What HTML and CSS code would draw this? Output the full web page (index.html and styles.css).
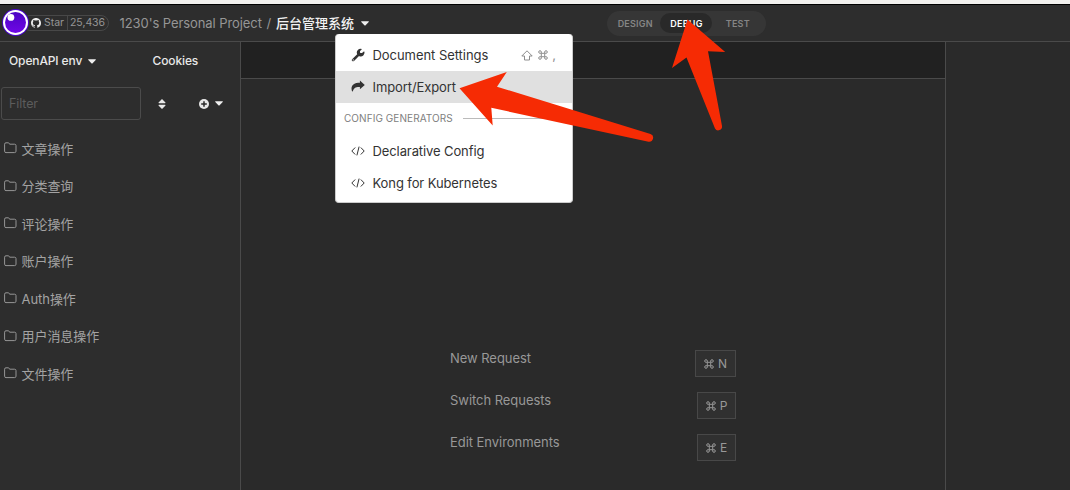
FILE: index.html
```html
<!DOCTYPE html>
<html lang="en">
<head>
<meta charset="utf-8">
<title>后台管理系统</title>
<link rel="stylesheet" href="styles.css">
</head>
<body>
<svg class="defs" width="0" height="0">
  <symbol id="folder" viewBox="0 0 13 12"><path d="M.6 2.200Q.6.800 2 .8h2.200q.8 0 1.100.7l.3.700h5Q12 2.200 12 3.600v5.600q0 1.400-1.400 1.400H2Q.6 10.600 .6 9.200z" fill="none" stroke="currentColor"/></symbol>
  <symbol id="caret" viewBox="0 0 8 5"><path d="M.4.2h7.200q.5.300.1.700L4.400 4.400q-.4.300-.8 0L.3.900Q-.1.500.4.200z" fill="currentColor"/></symbol>
  <symbol id="code" viewBox="0 0 14 10"><path d="M4.200 1.500.8 5l3.400 3.500M9.800 1.500 13.200 5 9.800 8.500M8.100.6 5.900 9.400" fill="none" stroke="currentColor" stroke-width="1"/></symbol>
  <symbol id="cmd" viewBox="0 0 10 10"><path d="M3.300 3.300h3.400v3.400H3.300zM3.300 3.300H2.100A1.300 1.300 0 1 1 3.300 2zM6.700 3.300V2a1.300 1.300 0 1 1 1.200 1.300zM6.700 6.700h1.200A1.300 1.300 0 1 1 6.700 8zM3.300 6.700V8a1.300 1.300 0 1 1-1.200-1.300z" fill="none" stroke="currentColor" stroke-width="1"/></symbol>
</svg>
<div class="app">
  <div class="window-edge"></div>
  <header class="header">
    <svg class="logo" viewBox="0 0 27 27"><defs><linearGradient id="violet" x1="0" y1="0" x2="0" y2="1"><stop offset="0" stop-color="#4b04c4"/><stop offset="1" stop-color="#7006e6"/></linearGradient></defs><circle cx="13.500" cy="13.500" r="13.400" fill="#4a06cf"/><circle cx="13.500" cy="13.500" r="12.500" fill="#fff"/><circle cx="13.500" cy="13.500" r="10.500" fill="url(#violet)"/><circle cx="8.900" cy="8.400" r="3.400" fill="#fff"/></svg>
    <div class="stars">
      <span class="star-label"><svg class="github" viewBox="0 0 16 16"><path fill="currentColor" d="M8 0C3.580 0 0 3.580 0 8c0 3.540 2.290 6.530 5.470 7.590.4.070.55-.17.55-.38v-1.490c-2.010.37-2.530-.49-2.690-.94-.09-.23-.48-.94-.82-1.130-.28-.15-.68-.52-.01-.53.63-.01 1.080.58 1.230.82.72 1.210 1.870.87 2.330.66.070-.52.280-.87.510-1.070-1.780-.2-3.640-.89-3.640-3.950 0-.87.31-1.590.82-2.150-.08-.2-.36-1.020.08-2.120 0 0 .67-.21 2.200.82a7.600 7.600 0 0 1 4 0c1.530-1.040 2.200-.82 2.200-.82.44 1.100.16 1.920.08 2.120.51.560.82 1.270.82 2.150 0 3.070-1.870 3.750-3.650 3.950.29.25.54.73.54 1.480v2.200c0 .21.15.46.55.38A8 8 0 0 0 16 8c0-4.420-3.580-8-8-8z"/></svg>Star</span>
      <span class="star-count">25,436</span>
    </div>
    <div class="crumbs"><span class="project">1230's Personal Project</span><span class="slash">/</span><b class="document">后台管理系统</b><svg class="caret"><use href="#caret"/></svg></div>
    <nav class="tabs"><span class="tab">DESIGN</span><span class="tab tab-active">DEBUG</span><span class="tab">TEST</span></nav>
  </header>
  <div class="columns">
    <aside class="sidebar">
      <div class="env-row"><span class="env">OpenAPI env</span><svg class="caret"><use href="#caret"/></svg><span class="cookies">Cookies</span></div>
      <div class="filter-row">
        <div class="filter">Filter</div>
        <svg class="sort" viewBox="0 0 8 10"><path d="M4 0 7.500 3.600Q7.600 4.200 7 4.200H1Q.4 4.200.5 3.600zM4 10 7.500 6.400Q7.600 5.800 7 5.800H1Q.4 5.800.5 6.400z" fill="currentColor"/></svg>
        <svg class="plus" viewBox="0 0 10 10"><circle cx="5" cy="5" r="5" fill="currentColor"/><path d="M5 2.200v5.600M2.200 5h5.600" stroke="#2a2a2a" stroke-width="1.500"/></svg>
        <svg class="caret"><use href="#caret"/></svg>
      </div>
      <ul class="folders">
        <li><svg><use href="#folder"/></svg>文章操作</li>
        <li><svg><use href="#folder"/></svg>分类查询</li>
        <li><svg><use href="#folder"/></svg>评论操作</li>
        <li><svg><use href="#folder"/></svg>账户操作</li>
        <li><svg><use href="#folder"/></svg>Auth操作</li>
        <li><svg><use href="#folder"/></svg>用户消息操作</li>
        <li><svg><use href="#folder"/></svg>文件操作</li>
      </ul>
    </aside>
    <main class="request">
      <div class="url-bar"></div>
      <div class="hints">
        <div class="hint"><span>New Request</span><kbd class="key-wide"><svg class="cmd"><use href="#cmd"/></svg>N</kbd></div>
        <div class="hint"><span>Switch Requests</span><kbd><svg class="cmd"><use href="#cmd"/></svg>P</kbd></div>
        <div class="hint"><span>Edit Environments</span><kbd><svg class="cmd"><use href="#cmd"/></svg>E</kbd></div>
      </div>
    </main>
    <section class="response"></section>
  </div>
  <div class="menu">
    <div class="item"><svg class="item-icon" viewBox="0 0 14 14"><path d="M1.100 11.200 6.200 6.300A3.800 3.800 0 0 1 11 1.100L8.900 3.200l.3 1.700 1.800.2 2.100-1.900A3.700 3.700 0 0 1 8 8L3 12.900Q2.100 13.700 1.200 12.900.3 12 1.100 11.200z" fill="currentColor"/><circle cx="2.200" cy="11.900" r=".6" fill="#fff"/></svg><span>Document Settings</span><span class="shortcut"><svg class="shift" viewBox="0 0 12 11"><path d="M6 .8 11.200 6H8.500v4h-5V6H.8z" fill="none" stroke="currentColor"/></svg><svg class="cmd"><use href="#cmd"/></svg><span class="comma">,</span></span></div>
    <div class="item item-active"><svg class="item-icon" viewBox="0 0 14 14"><path d="M8.900.4 13.800 4.900 8.900 9.300V7.100C4.900 6.900 2.600 7.900 1.800 11.800Q.5 11 .5 8.700C.6 4.600 3.700 2.800 8.900 2.800z" fill="currentColor"/></svg><span>Import/Export</span></div>
    <div class="section"><span>CONFIG GENERATORS</span><i></i></div>
    <div class="item"><svg class="code"><use href="#code"/></svg><span>Declarative Config</span></div>
    <div class="item"><svg class="code"><use href="#code"/></svg><span>Kong for Kubernetes</span></div>
  </div>
  <svg class="arrows" viewBox="0 0 1070 490"><g fill="#f62b04"><path d="M459.500 88.200 506.800 71.900 497 86.700 650.500 134A4 4 0 0 1 648.500 141.700L491.300 107.800 492.700 125.500z"/><path d="M687.500 19.500 725.200 52 708 51.300 722 126A3.800 3.800 0 0 1 715 128.500L686.500 57.600 672 68z"/></g></svg>
</div>
</body>
</html>
```
FILE: styles.css
```css
* { box-sizing: border-box; }
body { margin: 0; background: #2a2a2a; font: 13px/20px Inter, "Noto Sans CJK SC", sans-serif; color: #ddd; }
svg { display: block; flex: none; }
.defs { position: absolute; }
.app { position: relative; width: 1070px; height: 490px; overflow: hidden; display: flex; flex-direction: column; }
.window-edge { height: 5px; background: #f1f0ee; border-bottom: 1px solid #000; flex: none; }
.header { height: 37px; flex: none; display: flex; align-items: center; background: #2d2d2d; border-bottom: 1px solid #4a4a4a; padding-left: 1.500px; }
.logo { width: 27px; height: 27px; margin-top: -1px; z-index: 1; }
.stars { display: flex; align-items: center; width: 87.500px; height: 16px; margin-left: -7px; border: 1px solid #484848; border-radius: 8px; font-size: 10.500px; color: #969696; line-height: 14px; }
.star-label { display: flex; align-items: center; width: 45px; height: 14px; padding-left: 8.500px; border-right: 1px solid #484848; flex: none; }
.github { width: 10px; height: 10px; color: #eee; margin-right: 3px; }
.star-count { padding-left: 2.500px; letter-spacing: -.05px; }
.crumbs { display: flex; align-items: center; width: 260px; margin-left: 10.500px; font-size: 13px; color: #969696; white-space: nowrap; }
.project { width: 143.500px; letter-spacing: -.08px; }
.slash { width: 12px; padding-left: 3.500px; }
.document { width: 79px; padding-left: 1px; font-size: 13px; font-weight: 500; color: #f2f2f2; }
.caret { width: 8px; height: 5px; color: #eee; }
.crumbs .caret { margin-left: 7px; }
.tabs { display: flex; align-items: center; width: 159px; height: 25px; margin-left: 227.500px; padding: 0 3px 0 2px; border-radius: 13px; background: #363636; font-size: 9px; font-weight: 600; color: #858585; letter-spacing: .2px; }
.tab { display: flex; align-items: center; justify-content: center; height: 20px; width: 52px; padding: 2px 0 0 1px; border-radius: 10px; }
.tab-active { background: #292929; color: #fff; }
.columns { display: flex; flex: 1; min-height: 0; }
.sidebar { width: 241px; border-right: 1px solid #4a4a4a; background: #2d2d2d; }
.env-row { display: flex; align-items: center; height: 38px; padding-left: 9px; font-size: 12px; font-weight: 500; color: #e8e8e8; letter-spacing: -.12px; }
.env { width: 79px; }
.cookies { margin-left: 56.500px; }
.filter-row { display: flex; align-items: center; height: 47px; padding-left: 1px; color: #e8e8e8; }
.filter { width: 140px; height: 33px; border: 1px solid #4b4b4b; border-radius: 3px; padding-left: 7px; line-height: 32px; font-size: 12.500px; letter-spacing: -.1px; color: #5c5c5c; }
.sort { width: 8px; height: 10px; margin-left: 17px; }
.plus { width: 10px; height: 10px; margin: 0 5.500px 0 33px; }
.folders { list-style: none; margin: 3px 0 0; padding: 0 0 0 4px; color: #a3a3a3; }
.folders li { display: flex; align-items: center; height: 37.500px; letter-spacing: -.05px; }
.folders svg { width: 13px; height: 12px; margin: -1px 4.500px 0 0; color: #969696; }
.request { width: 705px; border-right: 1px solid #4a4a4a; }
.url-bar { height: 37px; border-bottom: 1px solid #4a4a4a; background: #212121; }
.hints { margin: 271px 209px 0; color: #989898; letter-spacing: -.05px; }
.hint { display: flex; justify-content: space-between; height: 42px; line-height: 17px; }
.request kbd { display: flex; align-items: center; justify-content: center; width: 39px; height: 27px; border: 1px solid #484848; background: #303030; font: 12px Inter, sans-serif; }
.request .key-wide { width: 41px; }
.cmd { width: 10px; height: 10px; }
kbd .cmd { margin-right: 4px; }
.menu { position: absolute; left: 335px; top: 34px; width: 238px; height: 169px; padding-top: 5px; border: 1px solid #ccc; border-top: 0; border-radius: 4px; background: #fff; color: #333; overflow: hidden; }
.item { display: flex; align-items: center; height: 32px; padding-left: 15px; letter-spacing: -.1px; }
.item:first-child { letter-spacing: -.05px; }
.item-active { background: #e0e0e0; }
.item-icon { width: 14px; height: 14px; margin-right: 7.500px; }
.code { width: 14px; height: 10px; margin-right: 7.500px; }
.shortcut { display: flex; align-items: center; margin-left: auto; padding-right: 16px; color: #8d8d8d; }
.shift { width: 12px; height: 11px; margin-right: 5px; }
.comma { margin-left: 4px; }
.section { display: flex; align-items: center; height: 32px; padding: 0 0 2px 8px; font-size: 10px; color: #808080; }
.section span { letter-spacing: .07px; }
.section i { flex: 1; height: 1px; background: #bbb; margin: 0 8px 0 10px; }
.arrows { position: absolute; left: 0; top: 0; width: 1070px; height: 490px; pointer-events: none; }
```
